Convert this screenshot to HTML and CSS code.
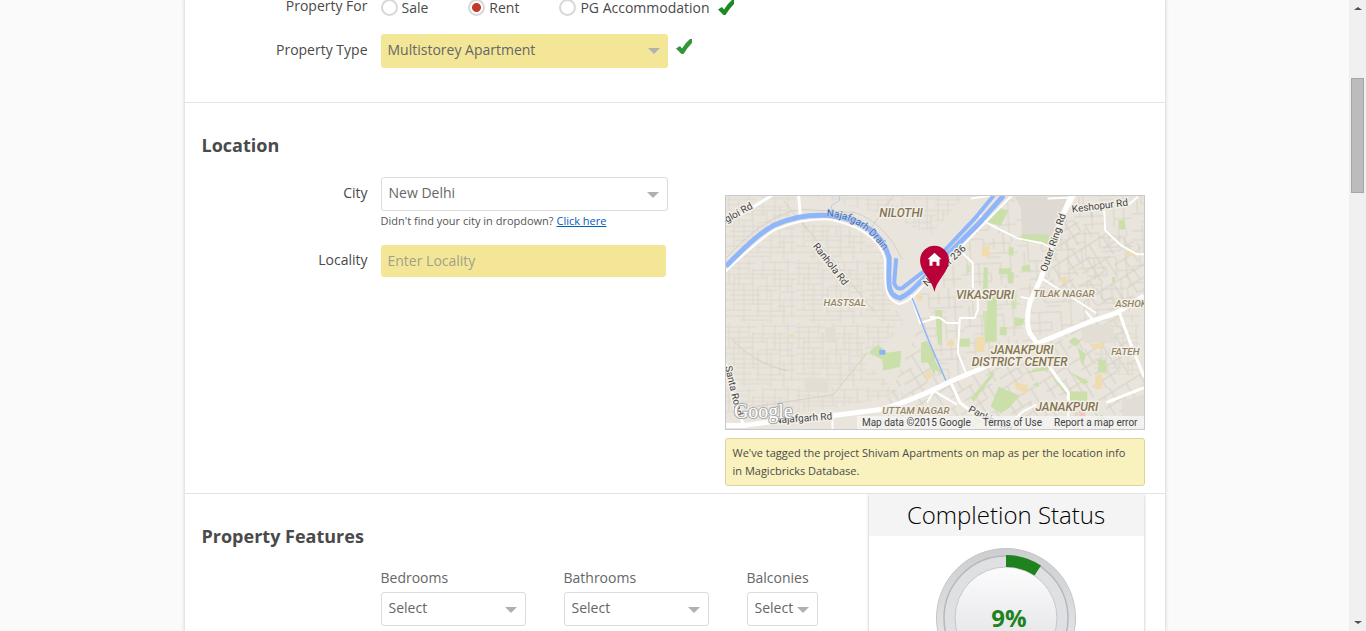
FILE: index.html
```html
<!DOCTYPE html>
<html lang="en">
<head>
<meta charset="utf-8">
<title>Post Property</title>
<link rel="stylesheet" href="styles.css">
</head>
<body>
<div class="viewport">
<main class="sheet">
  <section class="section section-type">
    <div class="row row-radios" role="radiogroup" aria-labelledby="for-label">
      <span class="label" id="for-label">Property For</span>
      <div class="radios">
        <label class="radio radio-sale"><input type="radio" name="for">Sale</label>
        <label class="radio radio-rent"><input type="radio" name="for" checked>Rent</label>
        <label class="radio"><input type="radio" name="for">PG Accommodation</label>
        <svg class="tick" viewBox="0 0 16 16"><path d="M0 9.500 L4 7 L6 9.500 Q9 4 14 0 H16 V4 Q11 9 7.500 15 L5.500 15 Z" fill="#1e8b22"/></svg>
      </div>
    </div>
    <div class="row">
      <label class="label" for="ptype">Property Type</label>
      <div class="select wide filled"><select id="ptype"><option>Multistorey Apartment</option></select></div>
      <svg class="tick tick-soft" viewBox="0 0 16 16"><path d="M0 9.500 L4 7 L6 9.500 Q9 4 14 0 H16 V4 Q11 9 7.500 15 L5.500 15 Z" fill="#1e8b22"/></svg>
    </div>
  </section>

  <section class="section section-location">
    <h2>Location</h2>
    <div class="location">
      <div class="fields">
        <div class="row">
          <label class="label" for="city">City</label>
          <div class="select wide"><select id="city"><option>New Delhi</option></select></div>
        </div>
        <p class="hint">Didn't find your city in dropdown? <a href="#">Click here</a></p>
        <div class="row">
          <label class="label" for="locality">Locality</label>
          <input class="text" id="locality" type="text" placeholder="Enter Locality">
        </div>
      </div>
      <div class="mapcol">
        <div class="map">
          <svg class="mapart" viewBox="0 0 420 235" preserveAspectRatio="xMidYMid slice">
            <defs>
              <pattern id="streets" width="70" height="64" patternUnits="userSpaceOnUse">
                <path d="M0 4H30M38 3H70M0 9H22M26 11H60M0 15H70M8 19H40M46 20H70M0 25H28M34 27H66M0 31H52M56 33H70M4 36H34M0 41H70M10 45H48M52 47H70M0 51H26M30 52H60M0 57H70M14 61H44M3 0V25M8 15V51M13 4V31M18 25V64M23 0V15M27 9V45M32 27V57M37 0V20M41 15V41M45 31V64M49 3V27M54 11V52M58 41V64M62 0V33M66 20V57" fill="none" stroke="#ddd8ce" stroke-width="1"/>
              </pattern>
              <pattern id="blocks" width="58" height="52" patternUnits="userSpaceOnUse" patternTransform="rotate(-3)">
                <path d="M0 5H24V20H58M10 0V30H40V52M24 10H50V34M0 40H30M34 5V16M44 0V20M6 20V40M18 30V52M50 34V52M0 14H10M26 24H40M40 44H58M30 40V48H10M52 4V10" fill="none" stroke="#d9d4ca" stroke-width="1"/>
              </pattern>
              <pattern id="slant" width="42" height="46" patternUnits="userSpaceOnUse" patternTransform="rotate(-32)">
                <path d="M0 5H42M0 16H25M10 26H42M0 36H30M5 5V26M14 0V16M22 16V46M31 5V36M38 26V46M12 36V46" fill="none" stroke="#d5d0c6" stroke-width="1"/>
              </pattern>
              <path id="drain" d="M101 21 C126 22 146 34 164 64"/>
            </defs>
            <rect width="420" height="235" fill="#e9e5dc"/>
            <path d="M0 75L50 36L75 27L130 32L158 60V96L180 128L140 170L180 200L100 215L0 222ZM0 0H70V16L0 62ZM80 0H240L205 40L165 20Z" fill="url(#streets)"/>
            <path d="M200 80L290 0H420V115L395 118L312 150L222 188L190 110Z" fill="url(#blocks)"/>
            <path d="M320 88L390 118L420 100V50L335 20ZM165 200L195 130L222 188L312 150L395 118L420 180V235H150Z" fill="url(#slant)"/>
            <path d="M370 120L415 118V180H370Z" fill="url(#streets)"/>
            <path d="M290 1H347L330 45L297 39V14Z" fill="#ded9d2"/>
            <path d="M355 130H390V148H360ZM78 183L103 184V198L80 197ZM100 132H110V146H100ZM398 206L420 200V222H398Z" fill="#e2ddd5"/>
            <g fill="#cadfaa">
              <path d="M262 27L273 12L284 15L276 30ZM297 39H322L331 45V56L315 48L297 46ZM259 72H263V98H258ZM264 98H272V147H260ZM274 73H286V79H274ZM283 77H289V88H283ZM284 52H289V60H284ZM297 71L305 69L306 76H297ZM388 82H391V87H388ZM394 25L400 24L402 34H395ZM210 115H217V150H213ZM233 144H245V152H233ZM290 122L300 124L298 130L290 132ZM145 156L153 150L162 158L176 156L175 172L158 176L157 165L144 158Z"/>
              <path d="M196 148L202 146L210 160V182L203 168H196ZM205 158L218 180L208 174ZM266 212L274 192L295 201L285 213L276 219ZM296 180L323 170L325 175L300 179ZM344 147L350 142L356 146L352 152ZM328 183L345 197H363V213L346 206ZM345 177L365 187L360 190ZM374 165H382V178H374ZM246 204L268 177L270 179L249 207ZM308 190L313 187L315 192ZM249 227H262V220H251ZM353 152L362 160L358 171ZM275 132H282V140H275ZM370 225L378 220L382 226Z"/>
              <path d="M258 116H270V147H260ZM260 75H262V99ZM287 95H292V114H287ZM242 70H246V77H242Z" opacity=".7"/>
            </g>
            <g fill="#f0dcae">
              <path d="M257 52L265 50V61H257ZM336 82L342 81L344 87L338 88ZM401 56L411 55L414 60H403ZM251 142H260V157H251ZM290 187L304 191L302 199L291 194ZM366 150L379 148V154H369ZM371 181L378 179V194H371ZM222 146H229V151H222ZM200 177L206 176V184H201ZM137 159L140 158V161H137ZM64 139H68V142H64ZM190 99L199 102L194 107ZM361 74L365 76L362 80Z"/>
            </g>
            <rect x="154" y="155" width="6" height="5" fill="#8ab4f8"/>
            <path d="M355 216H361V222H355Z" fill="#f3c6c2"/>
            <g fill="none" stroke="#d5d0c5">
              <path d="M0 63Q40 18 76 14L130 17Q160 28 177 64M76 26L150 118M5 144Q30 170 62 176M142 158L108 200L30 212M168 0L145 34M58 5L82 35"/>
            </g>
            <g fill="none" stroke="#fff" stroke-linejoin="round">
              <path d="M0 28L46 0M73 0L75 25" stroke-width="3"/>
              <path d="M0 76Q34 43 50 34Q76 23 104 24C135 30 156 44 160 66C160 90 159 104 174 109Q184 107 195 94L287 0M173 104L200 84L268 15L280 0" stroke-width="2"/>
              <path d="M252 17L263 28L293 43L318 48L328 53M246 3L267 0M237 57L248 68V92L253 101V115L250 123H235L233 158L241 178M205 122L215 123L222 128H235M186 100L195 128L214 122M323 3L348 2M317 83L372 118M380 15L381 35L397 50L413 59H420M392 8L405 9L414 1M296 102L307 104M344 204V235M205 194L232 210M210 195L202 208M107 222V235M312 210L300 216L290 224M397 117L394 104M361 116L368 124" stroke-width="2"/>
              <path d="M316 153L320 165L332 182L344 198V206M395 117L405 145L420 182M382 208L420 193M226 188L235 208L248 218L270 233M0 169L5 195L18 232M350 0L338 22" stroke-width="3"/>
              <path d="M347 0L338 20L328 48L317 82L305 108Q301 128 305 138L313 149" stroke-width="5"/>
              <path d="M0 231H18L62 225L108 221L155 215Q185 207 225 187L265 170L312 149L365 127L392 118L420 101" stroke-width="5"/>
            </g>
            <g fill="none" stroke="#8fb6fa">
              <path d="M0 71Q34 36 50 29Q75 18 104 20C138 24 158 39 164 63C164 85 160 100 175 103Q184 99 195 87L222 60L255 27L279 0" stroke-width="5"/>
              <path d="M171 63L169 88Q171 95 177 93L204 72L250 23L269 0" stroke-width="4"/>
              <path d="M187 103L205 149L221 186" stroke-width="1.500"/>
              <path d="M106 18V10L114 5V0M364 5L368 22" stroke-width="1" opacity=".5"/>
            </g>
            <g class="maplabels road">
              <text transform="translate(-4 30) rotate(-29)">ngloi Rd</text>
              <text transform="translate(87 51) rotate(52)">Ranhola Rd</text>
              <text transform="translate(202 92) rotate(-44)">Number 236</text>
              <text transform="translate(322 77) rotate(-71)">Outer Ring Rd</text>
              <text transform="translate(348 17) rotate(-7)">Keshopur Rd</text>
              <text transform="translate(49 229) rotate(-4)">Najafgarh Rd</text>
              <text transform="translate(-1 172) rotate(77)">Santa Road</text>
              <text transform="translate(243 217) rotate(27)">Pankha Rd</text>
            </g>
            <text class="water"><textPath href="#drain">Najafgarh Drain</textPath></text>
            <g class="maplabels area">
              <text x="154" y="22">NILOTHI</text>
              <text x="231" y="104">VIKASPURI</text>
              <text x="266" y="159">JANAKPURI</text>
              <text x="247" y="171">DISTRICT CENTER</text>
              <text x="311" y="216">JANAKPURI</text>
            </g>
            <g class="maplabels minor">
              <text x="98" y="111">HASTSAL</text>
              <text x="309" y="102">TILAK NAGAR</text>
              <text x="391" y="112">ASHOK</text>
              <text x="387" y="160">FATEH</text>
              <text x="157" y="220">UTTAM NAGAR</text>
            </g>
            <text class="brand" x="8" y="224">Google</text>
            <path d="M209.500 97C207 84 195 77 195 65A14.500 14.500 0 0 1 224 65C224 77 212 84 209.500 97Z" fill="#b90039"/>
            <path d="M202.500 64L209.500 57.500L216.500 64H214.500V70.500H211.500V66.500H207.500V70.500H204.500V64Z" fill="#fff"/>
          </svg>
          <div class="mapbar"><span>Map data ©2015 Google</span><a href="#">Terms of Use</a><a href="#">Report a map error</a></div>
        </div>
        <p class="notice">We've tagged the project Shivam Apartments on map as per the location info in Magicbricks Database.</p>
      </div>
    </div>
  </section>

  <section class="section section-features">
    <div class="features">
      <h2>Property Features</h2>
      <div class="counts">
        <div class="count"><label for="bed">Bedrooms</label><div class="select"><select id="bed"><option>Select</option></select></div></div>
        <div class="count"><label for="bath">Bathrooms</label><div class="select"><select id="bath"><option>Select</option></select></div></div>
        <div class="count count-small"><label for="balc">Balconies</label><div class="select"><select id="balc"><option>Select</option></select></div></div>
      </div>
    </div>
    <aside class="status">
      <h3>Completion Status</h3>
      <div class="gauge">
        <svg viewBox="0 0 140 140">
          <defs>
            <linearGradient id="rim" x2="0" y2="1"><stop offset="0" stop-color="#cdced0"/><stop offset="1" stop-color="#efeff0"/></linearGradient>
            <linearGradient id="face" x2="0" y2="1"><stop offset="0" stop-color="#fcfcfd"/><stop offset="1" stop-color="#dcdde0"/></linearGradient>
          </defs>
          <circle cx="70" cy="70" r="69.500" fill="url(#rim)" stroke="#c4c5c7"/>
          <circle cx="70" cy="70" r="62" fill="#dfe0e4" stroke="#b7b8ba" stroke-width="1.500"/>
          <circle cx="70" cy="70" r="51" fill="url(#face)" stroke="#c6c7ca"/>
          <path d="M70 7A63 63 0 0 1 105 17.600L98.500 27.500A51 51 0 0 0 70 19Z" fill="#1e821e"/>
        </svg>
        <strong>9%</strong>
      </div>
    </aside>
  </section>
</main>
</div>
<div class="scrollbar" aria-hidden="true">
  <i class="arrow up"></i><span class="thumb"></span><i class="arrow down"></i>
</div>
</body>
</html>
```
FILE: styles.css
```css
* { box-sizing: border-box; }
body {
  margin: 0;
  height: 100vh;
  display: flex;
  overflow: hidden;
  background: #fafafa;
  color: #4a4a4a;
  font: 14px/20px "Open Sans", "Noto Sans", sans-serif;
}
h2, h3, p { margin: 0; }
.viewport { flex: 1; overflow: hidden; }
.sheet {
  max-width: 980px;
  min-height: 100vh;
  margin: 0 auto;
  background: #fff;
  box-shadow: 0 0 3px 1px #d8d8d8;
}
.section { border-bottom: 1px solid #e3e3e3; }
h2 { padding-left: 17px; font-size: 18px; line-height: 24px; font-weight: 700; color: #4a4a4a; }
.row { display: flex; align-items: center; }
.label { width: 183px; margin-right: 13px; padding-bottom: 2px; text-align: right; }

.section-type { padding-bottom: 34px; }
.row-radios { height: 16px; margin-bottom: 18px; }
.row-radios .label { padding-bottom: 4px; }
.radios { display: flex; align-items: center; padding-bottom: 1px; }
.radio { display: flex; align-items: center; gap: 4px; }
.radio-sale, .radio-rent { margin-right: 40px; }
.radio input {
  appearance: none;
  width: 17px;
  height: 17px;
  margin: 0;
  border: 2px solid #d8d8d8;
  border-radius: 50%;
  background: #fff;
}
.radio input:checked { background: radial-gradient(circle, #c0392b 4px, #fff 5px); }
.tick { width: 16px; height: 16px; margin-left: 8px; }
.tick-soft { opacity: .9; margin-bottom: 8px; }

.select { position: relative; }
.select select {
  appearance: none;
  width: 100%;
  height: 34px;
  padding: 0 7px 2px;
  border: 1px solid #dcdcdc;
  border-radius: 3px;
  background: #fff;
  color: #666;
  font: inherit;
}
.select::after {
  content: "";
  position: absolute;
  right: 9px;
  top: 15px;
  border: 6px solid transparent;
  border-top-color: #b0b0b0;
  border-bottom: 0;
  pointer-events: none;
}
.wide { width: 287px; }
.filled select { background: #f3e797; border: 0; }
.filled::after { right: 8px; top: 14px; }
.text {
  width: 285px;
  height: 32px;
  padding: 0 7px 2px;
  border: 0;
  border-radius: 3px;
  background: #f3e797;
  color: #666;
  font: inherit;
}
.text::placeholder { color: #a29f8c; opacity: 1; }

.section-location { padding: 30px 20px 7px 0; }
.location { display: flex; justify-content: space-between; padding-top: 20px; }
.hint { padding: 1px 0 15px 196px; font-size: 11px; line-height: 18px; color: #555; }
.hint a { color: #0060b8; }
.mapcol { width: 420px; padding-top: 18px; }
.map { position: relative; border: 1px solid #c9c9c9; overflow: hidden; }
.mapart { display: block; width: 100%; height: 233px; }
.maplabels text, .water, .brand { paint-order: stroke; stroke-linejoin: round; }
.maplabels { font-family: Roboto, sans-serif; stroke: #f3f0e9; stroke-width: 3px; }
.road { font-size: 10px; fill: #444; }
.area { font-size: 12px; font-style: italic; font-weight: 500; fill: #847450; }
.minor { font-size: 10px; font-style: italic; font-weight: 500; fill: #938565; }
.water { font: 10px Roboto, sans-serif; fill: #3f69ad; stroke: #c7d7f0; stroke-width: 1px; }
.brand { font: 20px "Liberation Serif", serif; fill: #fff; stroke: #aaa; stroke-width: 2px; }
.mapbar {
  position: absolute;
  right: 0;
  bottom: 0;
  display: flex;
  gap: 12px;
  padding: 1px 6px 0 5px;
  background: rgba(245, 245, 245, .75);
  color: #444;
  font: 10px/12px Roboto, sans-serif;
}
.mapbar a { color: inherit; text-decoration: none; }
.notice {
  margin-top: 8px;
  padding: 5px 7px;
  border: 1px solid #ddd49a;
  border-radius: 3px;
  background: #f9f2bf;
  font-size: 11px;
  line-height: 18px;
}

.section-features { display: flex; justify-content: space-between; padding-right: 21px; }
.features { padding-top: 30px; }
.counts { display: flex; gap: 38px; padding: 20px 0 30px 196px; color: #666; }
.count { width: 145px; }
.count label { display: block; margin-bottom: 4px; }
.count-small { width: 71px; }
.status { width: 275px; background: #fff; box-shadow: 0 1px 3px #bbb; clip-path: inset(0 -5px -5px); }
.status h3 { background: #f4f4f4; color: #000; text-align: center; font-size: 24px; line-height: 42px; font-weight: 300; }
.gauge { position: relative; width: 140px; height: 140px; margin: 12px auto 20px; }
.gauge svg { display: block; }
.gauge strong { position: absolute; inset: 0; padding-left: 6px; text-align: center; line-height: 140px; font-size: 24px; color: #1e821e; }

.scrollbar {
  width: 17px;
  padding: 7px 2px;
  display: flex;
  flex-direction: column;
  align-items: center;
  background: #f0f0f0;
}
.thumb { width: 13px; height: 115px; margin-top: 68px; background: #bcbcbc; border: 1px solid #a6a6a6; }
.arrow { border: 4px solid transparent; }
.up { border-top: 0; border-bottom: 3px solid #505050; }
.down { border-bottom: 0; border-top: 3px solid #505050; margin-top: auto; }
```
